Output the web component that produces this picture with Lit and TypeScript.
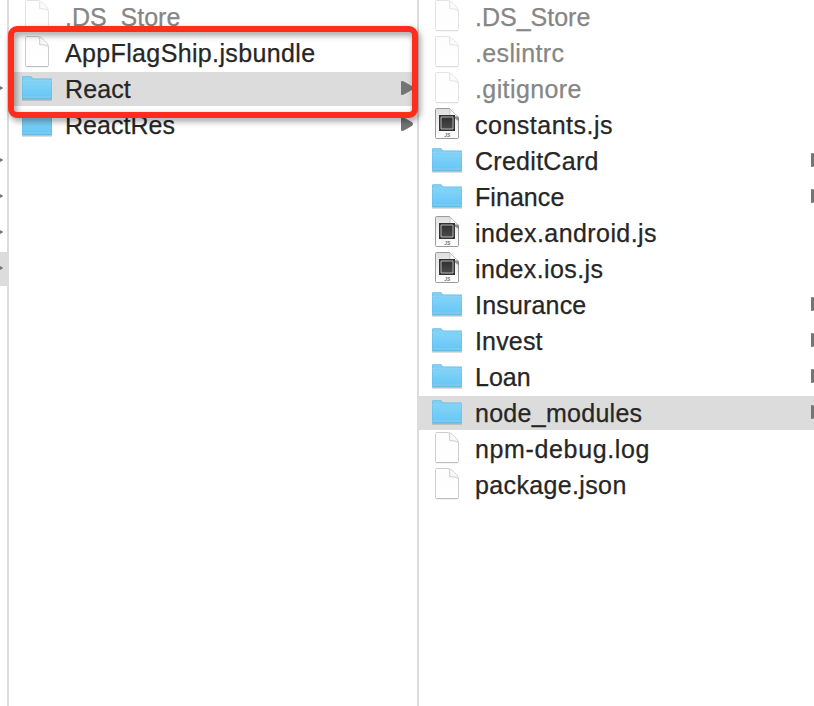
import { LitElement, html, css, svg, nothing } from "lit";
import { customElement, property } from "lit/decorators.js";
import { classMap } from "lit/directives/class-map.js";
import { styleMap } from "lit/directives/style-map.js";

type Kind = "page" | "js" | "folder";
interface Entry {
  name: string;
  kind: Kind;
  tracking: number;
  hidden?: boolean;
  selected?: boolean;
}

const middle: Entry[] = [
  { name: ".DS_Store", kind: "page", tracking: 0.0, hidden: true },
  { name: "AppFlagShip.jsbundle", kind: "page", tracking: 0.36 },
  { name: "React", kind: "folder", tracking: 0.1, selected: true },
  { name: "ReactRes", kind: "folder", tracking: 0.02 },
];

const right: Entry[] = [
  { name: ".DS_Store", kind: "page", tracking: 0.0, hidden: true },
  { name: ".eslintrc", kind: "page", tracking: 0.36, hidden: true },
  { name: ".gitignore", kind: "page", tracking: 0.4, hidden: true },
  { name: "constants.js", kind: "js", tracking: 0.5 },
  { name: "CreditCard", kind: "folder", tracking: 0.28 },
  { name: "Finance", kind: "folder", tracking: 0.06 },
  { name: "index.android.js", kind: "js", tracking: 0.43 },
  { name: "index.ios.js", kind: "js", tracking: 0.4 },
  { name: "Insurance", kind: "folder", tracking: 0.18 },
  { name: "Invest", kind: "folder", tracking: 0.16 },
  { name: "Loan", kind: "folder", tracking: 0.0 },
  { name: "node_modules", kind: "folder", tracking: 0.28, selected: true },
  { name: "npm-debug.log", kind: "page", tracking: 0.64 },
  { name: "package.json", kind: "page", tracking: 0.36 },
];

const parents = [false, false, true, false, true, true, true, true];

const arrow = html`<svg class="arrow" width="12" height="14" viewBox="0 0 12 14">
  <path d="M0 .4Q0 0 .8 0Q2.200 0 3.400.7L10.800 4.900Q13.200 7 10.800 9.100L3.400 13.300Q2.200 14 .8 14Q0 14 0 13.600Z" fill="#757575" />
</svg>`;

const pageShape = svg`
  <path d="M2.500 1.500Q2.500.5 3.500.5H15.500C18 .5 25.500 8 25.500 10.500V29.500Q25.500 30.500 24.500 30.500H3.500Q2.500 30.500 2.500 29.500Z"
    fill="url(#paper)" stroke="#cdcdcd" stroke-width="1" />
  <path d="M3 30.700H25" stroke="#b4b4b4" stroke-width=".8" />
  <path d="M16 .8Q17 3 16.700 8.700Q22.500 8.300 25.200 10.500" fill="#f8f8f8" stroke="#cdcdcd" stroke-width="1" />`;

@customElement("file-icon")
export class FileIcon extends LitElement {
  @property() kind: Kind = "page";

  static styles = css`
    :host { display: block; width: 32px; height: 34px; }
    svg { display: block; }
    .caption { font: italic bold 5px "Liberation Sans", sans-serif; }
  `;

  render() {
    if (this.kind === "folder") {
      return html`<svg width="32" height="34" viewBox="0 0 32 34">
        <defs>
          <linearGradient id="front" x1="0" y1="0" x2="0" y2="1">
            <stop offset="0" stop-color="#83d3f7" />
            <stop offset="1" stop-color="#6ac8f5" />
          </linearGradient>
        </defs>
        <path d="M1 28H31" stroke="#000" stroke-opacity=".18" stroke-width="1.400" />
        <path d="M1 5.500Q1 4.300 2.200 4.300H9.500Q10.500 4.300 11 5.300Q11.500 6.500 12.700 6.500H30Q31 6.500 31 7.500V26Q31 27.300 29.800 27.300H2.200Q1 27.300 1 26Z" fill="#62bce8" />
        <path d="M1.500 6V5.600Q1.600 4.900 2.300 4.900H9.300Q10 5 10.400 5.800Q11.200 7.200 12.500 7.200H30.400V8H1.500Z" fill="#80d0f3" />
        <path d="M1.500 9.200H30.500V24H1.500Z" fill="url(#front)" />
        <path d="M1 8.700H31" stroke="#9eddf8" stroke-width=".8" />
        <path d="M1.500 24H30.500V26.500H1.500Z" fill="#78cbf0" />
        <path d="M1.200 26.900H30.800" stroke="#5fb2da" stroke-width=".8" />
      </svg>`;
    }
    if (this.kind === "js") {
      return html`<svg width="32" height="34" viewBox="-2 0 32 34">
        <defs>
          <linearGradient id="paper" x1="0" y1="0" x2="0" y2="1">
            <stop offset="0" stop-color="#dedede" />
            <stop offset=".6" stop-color="#f5f5f5" />
            <stop offset="1" stop-color="#fff" />
          </linearGradient>
          <linearGradient id="chip" x1="0" y1="0" x2="0" y2="1">
            <stop offset="0" stop-color="#303030" />
            <stop offset="1" stop-color="#4a4a4a" />
          </linearGradient>
        </defs>
        <path d="M2.500 1.500Q2.500.5 3.500.5H16.500L25.500 9.500V29.500Q25.500 30.500 24.500 30.500H3.500Q2.500 30.500 2.500 29.500Z" fill="url(#paper)" stroke="#9b9b9b" />
        <path d="M17 7L25.500 13V8.500Z" fill="#555" fill-opacity=".6" />
        <path d="M17 1V8.500H24.800Z" fill="#fafafa" stroke="#b4b4b4" stroke-width=".7" />
        <path d="M6 7H22V23H6Z" fill="#333" />
        <path d="M8 9H20V21H8Z" fill="url(#chip)" stroke="#c4c4c4" stroke-width=".9" />
        <text class="caption" x="11.300" y="28.500" fill="#777">JS</text>
      </svg>`;
    }
    return html`<svg width="32" height="34" viewBox="-2 0 32 34">
      <defs>
        <linearGradient id="paper" x1="0" y1="0" x2="0" y2="1">
          <stop offset="0" stop-color="#fdfdfd" />
          <stop offset="1" stop-color="#fff" />
        </linearGradient>
      </defs>
      ${pageShape}
    </svg>`;
  }
}

@customElement("app-root")
export class AppRoot extends LitElement {
  static styles = css`
    :host {
      display: block;
      position: relative;
      width: 814px;
      height: 706px;
      overflow: hidden;
      background: #fff;
      color: #262626;
      font: 25px/34px "Liberation Sans", Arial, sans-serif;
    }
    .browser { display: grid; grid-template-columns: 9px 410px 410px; height: 100%; }
    .column { display: flex; flex-direction: column; gap: 2px; box-sizing: border-box; border-right: 2px solid #dcdcdc; }
    .row { display: flex; align-items: center; height: 34px; flex: none; box-sizing: border-box; padding: 0 4px 0 12px; }
    .name { flex: 1; margin-left: 12px; white-space: pre; -webkit-text-stroke: 0.25px currentColor; }
    .hidden .name { color: #868686; }
    .hidden file-icon { opacity: 0.55; }
    .selected { background: #dcdcdc; }
    .arrow { display: block; margin-bottom: 2px; }
    .parent { justify-content: flex-end; padding: 0 4px 0 0; }
    .frame {
      position: absolute;
      left: 8px;
      top: 26px;
      width: 410px;
      height: 92px;
      box-sizing: border-box;
      border: 6px solid #ff2d1c;
      border-radius: 9px;
      filter: drop-shadow(2px 3px 3px rgba(0, 0, 0, 0.42));
    }
  `;

  private row(e: Entry) {
    return html`<div class=${classMap({ row: true, hidden: !!e.hidden, selected: !!e.selected })}>
      <file-icon .kind=${e.kind}></file-icon>
      <span class="name" style=${styleMap({ letterSpacing: `${e.tracking}px` })}>${e.name}</span>
      ${e.kind === "folder" ? arrow : nothing}
    </div>`;
  }

  render() {
    return html`
      <div class="browser">
        <div class="column">
          ${parents.map((open, i) => html`<div class=${classMap({ row: true, parent: true, selected: i === 7 })}>${open ? arrow : nothing}</div>`)}
        </div>
        <div class="column">${middle.map((e) => this.row(e))}</div>
        <div class="column">${right.map((e) => this.row(e))}</div>
      </div>
      <div class="frame"></div>
    `;
  }
}
